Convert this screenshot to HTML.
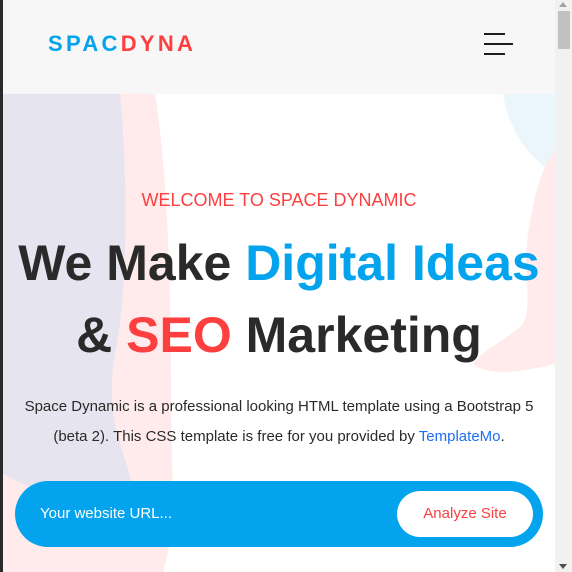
<!DOCTYPE html>
<html><head><style>
*{margin:0;padding:0;box-sizing:border-box}
body{width:572px;height:572px;overflow:hidden;background:#fff;font-family:"Liberation Sans",Arial,sans-serif;position:relative}
.strip{position:absolute;left:0;top:0;width:3px;height:572px;background:#2a2a2a}
.sb{position:absolute;left:555px;top:0;width:17px;height:572px;background:#f1f1f1}
.thumb{position:absolute;left:558px;top:11px;width:12px;height:38px;background:#c1c1c1}
.hdr{position:absolute;left:3px;top:0;width:552px;height:94px;background:#f7f7f7}
.logo{position:absolute;left:48px;top:31px;font-size:22px;font-weight:bold;letter-spacing:3.3px;color:#03a4ed}
.logo span{color:#fe3f40}
.ham{position:absolute;left:484px;height:2px;background:#1e1e1e}
.c{position:absolute;left:3px;width:552px;text-align:center}
</style></head><body>
<div class="strip"></div>
<svg style="position:absolute;left:3px;top:94px" width="552" height="478">
<path d="M152 0 C165 80 168 200 168 300 C168 380 175 430 160 478 L0 478 L0 0Z" fill="#ffebeb"/>
<path d="M0 0 L117 0 C125 80 125 200 112 260 C100 330 125 360 128 390 C125 410 80 420 40 400 L0 380Z" fill="#e6e4ee"/>
<path d="M500 0 C505 30 520 60 552 80 L552 0Z" fill="#eaf5fc"/>
<path d="M552 55 C535 80 530 110 525 140 C520 180 530 210 520 230 C505 245 480 255 470 270 C490 285 530 275 552 270 Z" fill="#ffebeb"/>
</svg>
<div class="hdr"></div>
<div class="logo">SPAC<span>DYNA</span></div>
<div class="ham" style="top:33px;width:21px"></div>
<div class="ham" style="top:43px;width:29px"></div>
<div class="ham" style="top:53px;width:21px"></div>
<div class="c" style="top:190px;font-size:18px;color:#fe3f40">WELCOME TO SPACE DYNAMIC</div>
<div class="c" style="top:227px;font-size:50px;font-weight:bold;color:#2a2a2a;line-height:72px">We Make <span style="color:#03a4ed">Digital Ideas</span><br>&amp; <span style="color:#fe3f40">SEO</span> Marketing</div>
<div class="c" style="top:392px;font-size:15px;color:#2a2a2a;line-height:30px">Space Dynamic is a professional looking HTML template using a Bootstrap 5<br>(beta 2). This CSS template is free for you provided by <span style="color:#1e6ff0">TemplateMo</span>.</div>
<div style="position:absolute;left:15px;top:481px;width:528px;height:66px;border-radius:33px;background:#03a4ed"></div>
<div style="position:absolute;left:40px;top:505px;font-size:15px;color:#fff">Your website URL...</div>
<div style="position:absolute;left:397px;top:491px;width:136px;height:46px;border-radius:23px;background:#fff;color:#fe3f40;font-size:15px;line-height:46px;text-align:center">Analyze Site</div>
<div class="sb"></div><div class="thumb"></div>
<div style="position:absolute;left:559px;top:2px;border:4px solid transparent;border-bottom:5px solid #a3a3a3;border-top:0"></div>
<div style="position:absolute;left:559px;top:564px;border:4px solid transparent;border-top:5px solid #505050;border-bottom:0"></div>
</body></html>
